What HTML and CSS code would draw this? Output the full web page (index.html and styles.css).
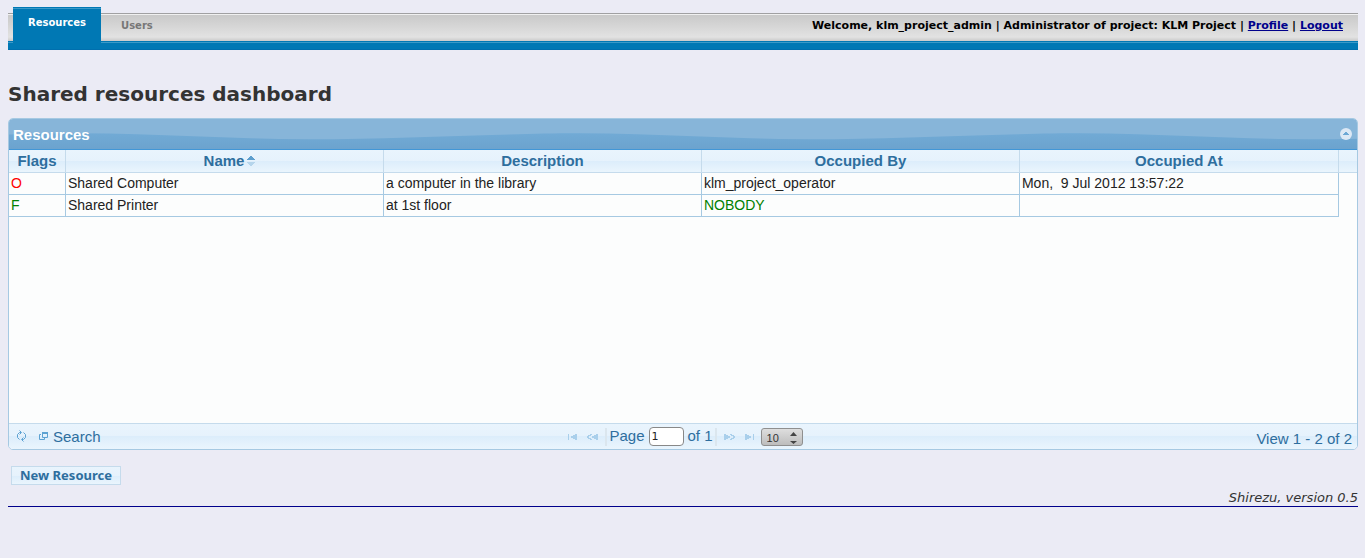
FILE: index.html
```html
<!DOCTYPE html>
<html lang="en">
<head>
<meta charset="utf-8">
<title>Shared resources dashboard</title>
<link rel="stylesheet" href="styles.css">
</head>
<body>
<header class="topbar">
  <nav class="tabs">
    <a class="tab tab-active" href="#resources">Resources</a>
    <a class="tab" href="#users">Users</a>
  </nav>
  <div class="account">Welcome, klm_project_admin | Administrator of project: KLM Project | <a href="#profile">Profile</a> | <a href="#logout">Logout</a></div>
</header>

<main>
  <h1 class="heading">Shared resources dashboard</h1>

  <section class="grid">
    <div class="grid-title">
      <svg class="wave" aria-hidden="true">
        <defs>
          <linearGradient id="deep" x1="0" y1="0" x2="0" y2="1">
            <stop offset="0" stop-color="#71aad5"/>
            <stop offset="1" stop-color="#6ca3ce"/>
          </linearGradient>
          <pattern id="ripple" width="500" height="30" patternUnits="userSpaceOnUse">
            <path d="M0 15.500C25 14.600 45 14.300 70 14.300C150 14.300 220 20.300 300 20.300C370 20.300 430 17 500 15.500V30H0Z" fill="url(#deep)"/>
          </pattern>
        </defs>
        <rect width="100%" height="30" fill="url(#ripple)"/>
      </svg>
      <span class="grid-name">Resources</span>
      <button class="collapse" type="button" aria-label="Collapse">
        <svg width="12" height="12" viewBox="0 0 12 12"><circle cx="6" cy="6" r="6" fill="#dce8f5"/><path d="M3 7h6v-1H8v-1H7v-1H5v1H4v1H3z" fill="#6da8d5"/></svg>
      </button>
    </div>

    <div class="grid-body">
      <table class="records">
        <colgroup><col class="col-flags"><col class="col-text"><col class="col-text"><col class="col-text"><col><col class="col-gutter"></colgroup>
        <thead>
          <tr>
            <th>Flags</th>
            <th class="sorted">Name<svg class="sort" width="8" height="10" viewBox="0 0 8 10" aria-hidden="true"><path d="M0 4V3h1V2h1V1h1V0h2v1h1v1h1v1h1v1z" fill="#5d9fce"/><path d="M0 6h8v1H7v1H6v1H5v1H3V9H2V8H1V7H0z" fill="#b5d5ec"/></svg></th>
            <th>Description</th>
            <th>Occupied By</th>
            <th>Occupied At</th>
            <th class="gutter"></th>
          </tr>
        </thead>
        <tbody>
          <tr>
            <td class="occupied">O</td><td>Shared Computer</td><td>a computer in the library</td><td>klm_project_operator</td><td>Mon,&nbsp; 9 Jul 2012 13:57:22</td><td class="gutter"></td>
          </tr>
          <tr>
            <td class="free">F</td><td>Shared Printer</td><td>at 1st floor</td><td class="free">NOBODY</td><td></td><td class="gutter"></td>
          </tr>
        </tbody>
      </table>
    </div>

    <div class="pager">
      <div class="pager-tools">
        <button class="tool" type="button" aria-label="Reload">
          <svg width="11" height="12" viewBox="0 0 11 12" fill="none" stroke="#5da2d2"><path d="M5 2.500H3.500L1.500 4.500V7.500L3.500 9.500M3.500 .5L5.500 2.500L3.500 4.500M6 9.500H7.500L9.500 7.500V4.500L7.500 2.500M7.500 7.500L5.500 9.500L7.500 11.500"/></svg>
        </button>
        <button class="tool" type="button">
          <svg width="10" height="9" viewBox="0 0 10 9" fill="none" stroke="#5da2d2"><path d="M3 1H9" stroke-width="2"/><path d="M3.500 1V5.500H8.500V1M2 2.500H.5V7.500H5.500V6"/></svg>
          Search
        </button>
      </div>
      <div class="pager-pages">
        <button class="step" type="button" aria-label="First page" disabled><svg width="9" height="6" viewBox="0 0 9 6" fill="#a9cfeb"><path d="M0 0h1v6H0zM9 0v6H7V5H5V4H3V2h2V1h2V0z"/></svg></button>
        <button class="step" type="button" aria-label="Previous page" disabled><svg width="11" height="6" viewBox="0 0 11 6" fill="#a9cfeb"><path d="M5 0v1H4v1H2v2h2v1h1v1H3V5H1V4H0V2h1V1h2V0zM11 0v6H9V5H7V4H5V2h2V1h2V0z"/></svg></button>
        <span class="divider"></span>
        <label class="page-label" for="page">Page</label>
        <input class="page-input" id="page" type="text" value="1">
        <span class="page-total">of 1</span>
        <span class="divider"></span>
        <button class="step" type="button" aria-label="Next page" disabled><svg width="11" height="6" viewBox="0 0 11 6" fill="#a9cfeb"><path d="M6 0v1h1v1h2v2H7v1H6v1h2V5h2V4h1V2h-1V1H8V0zM0 0v6h2V5h2V4h2V2H4V1H2V0z"/></svg></button>
        <button class="step" type="button" aria-label="Last page" disabled><svg width="9" height="6" viewBox="0 0 9 6" fill="#a9cfeb"><path d="M8 0h1v6H8zM0 0v6h2V5h2V4h2V2H4V1H2V0z"/></svg></button>
        <span class="size">
          <select class="size-select" aria-label="Rows per page"><option>10</option><option>20</option><option>30</option></select>
          <svg class="size-arrows" width="7" height="12" viewBox="0 0 7 12" fill="#444" aria-hidden="true"><path d="M0 4L3.500 0L7 4zM0 9L3.500 12L7 9z"/></svg>
        </span>
      </div>
      <div class="pager-info">View 1 - 2 of 2</div>
    </div>
  </section>

  <button class="new-resource" type="button">New Resource</button>
</main>

<footer class="footer">Shirezu, version 0.5</footer>
</body>
</html>
```

FILE: styles.css
```css
* {
  box-sizing: border-box;
}

body {
  margin: 0;
  padding: 7px 7px 0 8px;
  background: #ebebf5;
  color: #333;
  font-family: Verdana, "DejaVu Sans", sans-serif;
}

button {
  margin: 0;
  padding: 0;
  border: 0;
  background: none;
  font: inherit;
  color: inherit;
}

svg {
  display: block;
}

.topbar {
  display: flex;
  justify-content: space-between;
  height: 43px;
  padding: 0 15px 0 5px;
  font-size: 11px;
  font-weight: bold;
  background:
    linear-gradient(#006fae, #006fae) 0 100% / 100% 1px no-repeat,
    linear-gradient(#0078b4 0 1px, #3b9ac8 1px 2px, #0078b4 2px) 0 34px / 100% 9px no-repeat,
    linear-gradient(#a0a0a2 0 1px, #f0f0f0 1px 2px, #c9c9c9 2px, #e2e2e2 24px, #cacaca 28px) 0 6px / 100% 28px no-repeat;
}

.tabs {
  display: flex;
  font-size: 10px;
}

.tab {
  height: 42px;
  padding: 10px 20px 0;
  line-height: 18px;
  color: #777;
  text-decoration: none;
}

.tab-active {
  padding: 7px 15px 0;
  color: #fff;
  background: linear-gradient(#0078b4 0 1px, #3b9ac8 1px 2px, #0078b4 2px);
}

.account {
  padding-top: 10px;
  line-height: 18px;
  color: #000;
}

.account a {
  color: #00008b;
}

.heading {
  margin: 32px 0 11px;
  font-size: 20px;
  line-height: 25px;
}

.grid {
  border: 1px solid #a6c9e2;
  border-radius: 5px;
  overflow: hidden;
  background: #fcfdfd;
  font-family: "Liberation Sans", Arial, sans-serif;
  font-size: 15px;
  color: #222;
}

.grid-title {
  position: relative;
  display: flex;
  align-items: center;
  justify-content: space-between;
  height: 31px;
  padding: 0 5px 0 4px;
  border-bottom: 1px solid #4297d7;
  background: #87b5d9;
  color: #fff;
  font-weight: bold;
}

.wave {
  position: absolute;
  inset: 0;
  width: 100%;
  height: 30px;
}

.grid-name,
.collapse {
  position: relative;
}

.grid-body {
  min-height: 273px;
}

.records {
  width: 100%;
  table-layout: fixed;
  border-collapse: separate;
  border-spacing: 0;
}

.col-flags {
  width: 57px;
}

.col-text {
  width: 23.59%;
}

.col-gutter {
  width: 18px;
}

.records th {
  height: 23px;
  padding: 0 2px;
  border-right: 1px solid #c5dbec;
  border-bottom: 1px solid #c5dbec;
  background: linear-gradient(#e9f4fd, #e6f2fc 50%, #dcedfb 50%, #eaf5fd);
  color: #2e6e9e;
  line-height: 20px;
}

.records .sorted {
  padding-left: 12px;
}

.records td {
  height: 22px;
  padding: 0 2px 1px;
  border-right: 1px solid #a6c9e2;
  border-bottom: 1px solid #a6c9e2;
  font-size: 14px;
  line-height: 20px;
}

.records th.gutter {
  border-right: 0;
}

.records td.gutter {
  border: 0;
}

.sort {
  display: inline-block;
  margin-left: 3px;
}

.records .occupied {
  color: #f00;
}

.records .free {
  color: #008000;
}

.pager {
  display: grid;
  grid-template-columns: 1fr auto 1fr;
  align-items: center;
  height: 26px;
  border-top: 1px solid #c5dbec;
  background: linear-gradient(#e9f4fd, #e6f2fc 50%, #dcedfb 50%, #eaf5fd);
  color: #2e6e9e;
}

.pager-tools {
  display: flex;
  gap: 12px;
  padding: 0 0 1px 7px;
}

.tool {
  display: flex;
  align-items: center;
  gap: 4px;
}

.pager-pages {
  display: flex;
  align-items: center;
}

.step {
  padding: 0 5px;
}

.divider {
  width: 2px;
  height: 18px;
  margin: 0 2px;
  background: #dbe6ee;
}

.page-label,
.page-total {
  padding-bottom: 2px;
}

.page-input {
  width: 35px;
  height: 19px;
  margin: 0 4px;
  padding: 0 2px;
  border: 1px solid #888;
  border-radius: 4px;
  background: #fff;
  color: #222;
  font-family: "DejaVu Sans", sans-serif;
  font-size: 11px;
}

.size {
  position: relative;
  margin-left: 2px;
}

.size-select {
  display: block;
  appearance: none;
  width: 42px;
  height: 18px;
  padding: 2px 5px 0;
  border: 1px solid #8f8f8f;
  border-radius: 3px;
  background: linear-gradient(#dedede, #bdbdbd);
  color: #333;
  font-family: "Liberation Sans", Arial, sans-serif;
  font-size: 11px;
}

.size-arrows {
  position: absolute;
  top: 4px;
  right: 6px;
  pointer-events: none;
}

.pager-info {
  padding: 3px 5px 0 0;
  text-align: right;
}

.new-resource {
  display: block;
  height: 19px;
  margin: 16px 0 0 3px;
  padding: 0 8px;
  border: 1px solid #c5dbec;
  background: linear-gradient(#e9f4fd, #e6f2fc 50%, #dcedfb 50%, #eaf5fd);
  color: #2e6e9e;
  font-family: "Noto Sans", sans-serif;
  font-size: 13px;
  font-weight: bold;
  line-height: 17px;
}

.footer {
  margin-top: 4px;
  border-bottom: 1px solid #00008b;
  font-size: 13px;
  font-style: italic;
  line-height: 17px;
  text-align: right;
}
```
